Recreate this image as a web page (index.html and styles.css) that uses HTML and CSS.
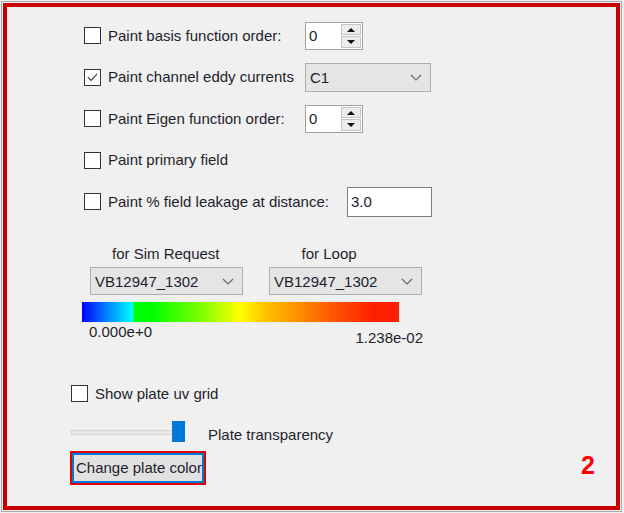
FILE: index.html
```html
<!DOCTYPE html>
<html>
<head>
<meta charset="utf-8">
<link rel="stylesheet" href="styles.css">
</head>
<body>
<div class="frame">
  <div class="opts">
    <div class="row">
      <label class="opt fixed"><span class="cb"></span><span>Paint basis function order:</span></label>
      <div class="spin"><span class="spin-val">0</span><span class="spin-btns"><span class="sb up"></span><span class="sb down"></span></span></div>
    </div>
    <div class="row">
      <label class="opt fixed"><span class="cb checked"><svg viewBox="0 0 16 16" width="16" height="16"><path d="M3 8.2 L6.4 11.6 L13 4.6" fill="none" stroke="#333" stroke-width="1.2"/></svg></span><span>Paint channel eddy currents</span></label>
      <div class="combo c1"><span>C1</span><svg class="chev" viewBox="0 0 12 7" width="12" height="7"><path d="M1 1 L6 6 L11 1" fill="none" stroke="#666" stroke-width="1.1"/></svg></div>
    </div>
    <div class="row">
      <label class="opt fixed"><span class="cb"></span><span>Paint Eigen function order:</span></label>
      <div class="spin"><span class="spin-val">0</span><span class="spin-btns"><span class="sb up"></span><span class="sb down"></span></span></div>
    </div>
    <div class="row">
      <label class="opt"><span class="cb"></span><span>Paint primary field</span></label>
    </div>
    <div class="row">
      <label class="opt"><span class="cb"></span><span>Paint % field leakage at distance:</span></label>
      <div class="text-input">3.0</div>
    </div>
  </div>

  <div class="sim">
    <div class="sim-labels">
      <span class="lbl-sim">for Sim Request</span>
      <span class="lbl-loop">for Loop</span>
    </div>
    <div class="sim-combos">
      <div class="combo wide"><span>VB12947_1302</span><svg class="chev" viewBox="0 0 12 7" width="12" height="7"><path d="M1 1 L6 6 L11 1" fill="none" stroke="#666" stroke-width="1.1"/></svg></div>
      <div class="combo wide"><span>VB12947_1302</span><svg class="chev" viewBox="0 0 12 7" width="12" height="7"><path d="M1 1 L6 6 L11 1" fill="none" stroke="#666" stroke-width="1.1"/></svg></div>
    </div>
    <div class="colorbar"></div>
    <div class="scale">
      <span class="min">0.000e+0</span>
      <span class="max">1.238e-02</span>
    </div>
  </div>

  <div class="plate">
    <label class="opt"><span class="cb"></span><span>Show plate uv grid</span></label>
    <div class="slider-row">
      <div class="slider"><span class="track"></span><span class="thumb"></span></div>
      <span class="slider-label">Plate transparency</span>
    </div>
    <button class="btn">Change plate color</button>
  </div>

  <span class="badge">2</span>
</div>
</body>
</html>
```
FILE: styles.css
```css
* { box-sizing: border-box; }
html, body { margin: 0; padding: 0; }
body {
  background: #f0f0f0;
  font-family: "Liberation Sans", Arial, sans-serif;
  font-size: 15px;
  color: #1e1e2c;
  width: 624px;
  height: 513px;
  overflow: hidden;
}
.frame {
  position: relative;
  margin: 3px;
  width: 617px;
  height: 507px;
  border: 4px solid #c80000;
  outline: 1px solid #a8a8a8;
  outline-offset: 1px;
  background: #f0f0f0;
}
.opts {
  padding: 8px 0 0 77px;
}
.row {
  height: 41.5px;
  display: flex;
  align-items: center;
}
.opt {
  display: flex;
  align-items: center;
  gap: 7px;
  line-height: 18px;
  white-space: nowrap;
}
.opt.fixed { width: 221px; }
.row .opt + .text-input { margin-left: 18px; }
.cb {
  width: 17px;
  height: 17px;
  border: 1px solid #333;
  background: #fff;
  display: inline-flex;
  align-items: center;
  justify-content: center;
  flex: none;
}
.cb svg { display: block; }
.spin {
  width: 58px;
  height: 28px;
  border: 1px solid #a0a0a0;
  background: #fff;
  display: flex;
}
.spin-val {
  flex: 1;
  padding-left: 3px;
  line-height: 26px;
}
.spin-btns {
  width: 21px;
  display: flex;
  flex-direction: column;
  padding: 1px 1px 1px 0;
  gap: 1px;
}
.sb {
  flex: 1;
  background: #ececec;
  border: 1px solid #c4c4c4;
  position: relative;
}
.sb::after {
  content: "";
  position: absolute;
  left: 50%;
  top: 50%;
  margin-left: -4px;
  border-left: 4px solid transparent;
  border-right: 4px solid transparent;
}
.sb.up::after { border-bottom: 4px solid #111; margin-top: -2px; }
.sb.down::after { border-top: 4px solid #111; margin-top: -2px; }
.combo {
  height: 29px;
  border: 1px solid #adadad;
  background: #e5e5e5;
  display: flex;
  align-items: center;
  justify-content: space-between;
  padding: 0 8px 0 4px;
}
.combo.c1 { width: 126px; }
.combo.wide { width: 153px; }
.chev { display: block; }
.text-input {
  width: 85px;
  height: 30px;
  border: 1px solid #7f7f7f;
  background: #fff;
  padding-left: 3px;
  line-height: 28px;
}
.sim {
  margin-top: 21px;
  padding-left: 74px;
}
.sim-labels {
  height: 20px;
  line-height: 20px;
  display: flex;
}
.lbl-sim { margin-left: 31px; }
.lbl-loop { margin-left: 82px; }
.sim-combos {
  margin-top: 3.5px;
  display: flex;
  gap: 26px;
  padding-left: 9px;
  height: 28px;
}
.sim-combos .combo { height: 28px; }
.colorbar {
  margin-top: 6px;
  width: 319px;
  height: 22px;
  border: 1px solid #e8e8e8;
  background: linear-gradient(to right,
    #0000ff 0px, #0088ff 26px, #00ffff 51px,
    #00ff00 52px, #00ff00 70px, #80ff00 120px, #ffff00 157px,
    #ffc000 185px, #ff9000 215px, #ff5000 255px, #ff2000 290px, #ff2000 319px);
}
.scale {
  width: 342px;
  display: flex;
  justify-content: space-between;
  padding-left: 8px;
  line-height: 18px;
}
.scale .max { margin-top: 6px; }
.plate {
  margin-top: 37.5px;
  padding-left: 64px;
}
.slider-row {
  margin-top: 18px;
  height: 22px;
  display: flex;
  align-items: center;
  gap: 23px;
}
.slider-label { margin-top: 6px; }
.slider {
  position: relative;
  width: 114px;
  height: 22px;
}
.track {
  position: absolute;
  left: 0;
  top: 9px;
  width: 107px;
  height: 5px;
  background: #e7e7e7;
  border: 1px solid #d6d6d6;
}
.thumb {
  position: absolute;
  left: 101px;
  top: 0;
  width: 13px;
  height: 21px;
  background: #0078d7;
}
.btn {
  display: block;
  margin: 10px 0 0 1px;
  width: 132px;
  height: 30px;
  padding: 0 0 0 2px;
  text-align: left;
  font: inherit;
  color: inherit;
  background: #e1e1e1;
  border: 2px solid #0078d7;
  box-shadow: 0 0 0 2px #e00000;
  line-height: 24px;
}
.badge {
  position: absolute;
  right: 21px;
  top: 443px;
  color: #ff0000;
  font-weight: bold;
  font-size: 25px;
  line-height: 30px;
}
```
